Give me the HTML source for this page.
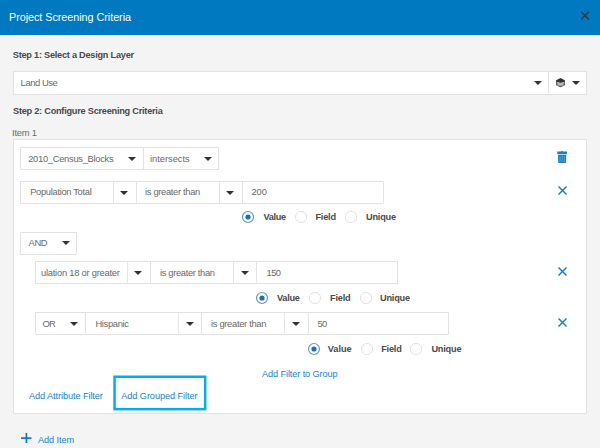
<!DOCTYPE html>
<html><head><meta charset="utf-8"><style>
*{box-sizing:border-box;margin:0;padding:0}
html,body{width:600px;height:448px;overflow:hidden;background:#f4f4f4;font-family:"Liberation Sans",sans-serif;color:#555}
.a{position:absolute;white-space:nowrap}
.hdr{left:0;top:0;width:600px;height:35px;background:#0079c1}
.title{font-size:10.8px;line-height:10px;color:#fff}
.lbl{font-size:9.2px;font-weight:bold;color:#4a4a4a;line-height:8px}
.txt{font-size:9.4px;line-height:8px;color:#6a6a6a}
.box{background:#fff;border:1px solid #e2e2e2;border-radius:1px;box-shadow:0 0 0.7px rgba(0,0,0,0.08)}
.sep{width:1px;background:#e6e6e6}
.arr{width:0;height:0;border-left:4.2px solid transparent;border-right:4.2px solid transparent;border-top:4.4px solid #333}
.link{font-size:9.2px;color:#1a82cc;line-height:8px}
.rad{width:12px;height:12px;border-radius:50%;border:1px solid #dcdcdc;background:#fff}
.rad.on{border:1.3px solid #5b9bc9}
.rad.on::after{content:"";position:absolute;left:2.2px;top:2.2px;width:5px;height:5px;border-radius:50%;background:#1f6fb0}
</style></head><body>
<div class="a hdr"></div>
<div class="a title" id="t0" style="left:9.00px;top:12px;letter-spacing:-0.040px">Project Screening Criteria</div>
<svg class="a" style="left:580px;top:10px" width="10" height="11" viewBox="0 0 10 11"><path d="M1.1 1.7L8.9 9.5M8.9 1.7L1.1 9.5" stroke="#2e3840" stroke-width="1.45"/></svg>
<div class="a lbl" id="t1" style="left:12.80px;top:51px;letter-spacing:-0.246px">Step 1: Select a Design Layer</div>
<div class="a box" style="left:13px;top:71px;width:574px;height:24px"></div>
<div class="a sep" style="left:548px;top:72px;height:22px"></div>
<div class="a txt" id="t2" style="left:20.60px;top:79px;letter-spacing:-0.429px">Land Use</div>
<div class="a arr" style="left:534.00px;top:80.70px"></div>
<div class="a arr" style="left:571.50px;top:80.70px"></div>
<svg class="a" style="left:555px;top:77px" width="12" height="11" viewBox="0 0 12 11"><path d="M5.5 4.8L9.4 3.8V8.2L5.5 9.7L1.6 8.2V3.8Z" fill="#9a9a9a" stroke="#333" stroke-width="0.8"/><path d="M2.3 5.6L8.7 8.6M8.7 5.6L2.3 8.6" stroke="#dadada" stroke-width="0.6"/><path d="M5.5 1.1L9.8 3.3V4.5L5.5 5.5L1.2 4.5V3.3Z" fill="#333"/></svg>
<div class="a lbl" id="t3" style="left:13.00px;top:107.3px;letter-spacing:-0.243px">Step 2: Configure Screening Criteria</div>
<div class="a txt" id="t4" style="left:12.00px;top:128.5px;letter-spacing:-0.200px">Item 1</div>
<div class="a box" style="left:13px;top:139px;width:574px;height:275px"></div>
<div class="a box" style="left:20px;top:147px;width:124px;height:23px"></div>
<div class="a txt" id="t5" style="left:28.20px;top:155px;letter-spacing:-0.306px">2010_Census_Blocks</div>
<div class="a arr" style="left:127.60px;top:157.00px"></div>
<div class="a box" style="left:143px;top:147px;width:76px;height:23px"></div>
<div class="a txt" id="t6" style="left:150.00px;top:155px;letter-spacing:-0.044px">intersects</div>
<div class="a arr" style="left:203.60px;top:157.00px"></div>
<svg class="a" style="left:552px;top:146px" width="20" height="22" viewBox="0 0 20 22"><path d="M8.6 4.9H11.4V5.8H8.6Z" fill="#3c8fd0"/><path d="M5.2 5.5H15V8.1H5.2Z" fill="#1a7fc4"/><path d="M5.9 8.8H14.3L14 16.4Q13.9 17 13.3 17H6.9Q6.3 17 6.2 16.4Z" fill="#1a7fc4"/><path d="M8 10V16M10.2 10V16M12.4 10V16" stroke="#6fb2e2" stroke-width="0.7"/></svg>
<div class="a box" style="left:20px;top:181px;width:117px;height:23px"></div>
<div class="a sep" style="left:113px;top:182px;height:21px"></div>
<div class="a txt" id="t7" style="left:30.20px;top:188px;letter-spacing:-0.333px">Population Total</div>
<div class="a arr" style="left:120.00px;top:190.50px"></div>
<div class="a box" style="left:136px;top:181px;width:107px;height:23px"></div>
<div class="a sep" style="left:219px;top:182px;height:21px"></div>
<div class="a txt" id="t8" style="left:145.00px;top:188px;letter-spacing:-0.329px">is greater than</div>
<div class="a arr" style="left:226.30px;top:190.50px"></div>
<div class="a box" style="left:242px;top:181px;width:142px;height:23px"></div>
<div class="a txt" id="t9" style="left:251.50px;top:188px;letter-spacing:-0.125px">200</div>
<svg class="a" style="left:241.40px;top:210.40px" width="14" height="14" viewBox="0 0 14 14"><circle cx="7" cy="7" r="5.5" fill="#fff" stroke="#5b9bc9" stroke-width="1.2"/><circle cx="7" cy="7" r="2.6" fill="#1f6fb0"/></svg>
<div class="a lbl" id="t10" style="left:263.40px;top:212.5px;letter-spacing:-0.300px">Value</div>
<svg class="a" style="left:294.40px;top:210.40px" width="14" height="14" viewBox="0 0 14 14"><circle cx="7" cy="7" r="5.6" fill="#fff" stroke="#e2e2e2" stroke-width="1"/></svg>
<div class="a lbl" id="t11" style="left:315.40px;top:212.5px;letter-spacing:-0.200px">Field</div>
<svg class="a" style="left:344.40px;top:210.40px" width="14" height="14" viewBox="0 0 14 14"><circle cx="7" cy="7" r="5.6" fill="#fff" stroke="#e2e2e2" stroke-width="1"/></svg>
<div class="a lbl" id="t12" style="left:366.00px;top:212.5px;letter-spacing:-0.200px">Unique</div>
<div class="a box" style="left:20px;top:232px;width:57px;height:23px"></div>
<div class="a txt" id="t13" style="left:28.50px;top:239px;letter-spacing:-0.375px">AND</div>
<div class="a arr" style="left:61.80px;top:241.00px"></div>
<div class="a box" style="left:35px;top:261px;width:116px;height:23px"></div>
<div class="a sep" style="left:127px;top:262px;height:21px"></div>
<div class="a txt" id="t14" style="left:41.00px;top:269px;letter-spacing:-0.250px">ulation 18 or greater</div>
<div class="a arr" style="left:134.10px;top:271.00px"></div>
<div class="a box" style="left:150px;top:261px;width:107px;height:23px"></div>
<div class="a sep" style="left:233px;top:262px;height:21px"></div>
<div class="a txt" id="t15" style="left:160.00px;top:269px;letter-spacing:-0.350px">is greater than</div>
<div class="a arr" style="left:240.60px;top:271.00px"></div>
<div class="a box" style="left:256px;top:261px;width:142px;height:23px"></div>
<div class="a txt" id="t16" style="left:266.60px;top:269px;letter-spacing:-0.650px">150</div>
<svg class="a" style="left:255.40px;top:291.10px" width="14" height="14" viewBox="0 0 14 14"><circle cx="7" cy="7" r="5.5" fill="#fff" stroke="#5b9bc9" stroke-width="1.2"/><circle cx="7" cy="7" r="2.6" fill="#1f6fb0"/></svg>
<div class="a lbl" id="t17" style="left:277.00px;top:293.5px;letter-spacing:-0.300px">Value</div>
<svg class="a" style="left:308.20px;top:291.10px" width="14" height="14" viewBox="0 0 14 14"><circle cx="7" cy="7" r="5.6" fill="#fff" stroke="#e2e2e2" stroke-width="1"/></svg>
<div class="a lbl" id="t18" style="left:330.00px;top:293.5px;letter-spacing:-0.200px">Field</div>
<svg class="a" style="left:358.60px;top:291.10px" width="14" height="14" viewBox="0 0 14 14"><circle cx="7" cy="7" r="5.6" fill="#fff" stroke="#e2e2e2" stroke-width="1"/></svg>
<div class="a lbl" id="t19" style="left:380.00px;top:293.5px;letter-spacing:-0.200px">Unique</div>
<div class="a box" style="left:35px;top:312px;width:51px;height:23px"></div>
<div class="a txt" id="t20" style="left:42.60px;top:320px;letter-spacing:-0.800px">OR</div>
<div class="a arr" style="left:69.60px;top:322.00px"></div>
<div class="a box" style="left:85px;top:312px;width:117px;height:23px"></div>
<div class="a sep" style="left:178px;top:313px;height:21px"></div>
<div class="a txt" id="t21" style="left:95.40px;top:320px;letter-spacing:-0.343px">Hispanic</div>
<div class="a arr" style="left:185.60px;top:322.00px"></div>
<div class="a box" style="left:201px;top:312px;width:108px;height:23px"></div>
<div class="a sep" style="left:284px;top:313px;height:21px"></div>
<div class="a txt" id="t22" style="left:211.00px;top:320px;letter-spacing:-0.321px">is greater than</div>
<div class="a arr" style="left:291.80px;top:322.00px"></div>
<div class="a box" style="left:308px;top:312px;width:141px;height:23px"></div>
<div class="a txt" id="t23" style="left:317.60px;top:320px;letter-spacing:-0.800px">50</div>
<svg class="a" style="left:306.80px;top:342.40px" width="14" height="14" viewBox="0 0 14 14"><circle cx="7" cy="7" r="5.5" fill="#fff" stroke="#5b9bc9" stroke-width="1.2"/><circle cx="7" cy="7" r="2.6" fill="#1f6fb0"/></svg>
<div class="a lbl" id="t24" style="left:327.80px;top:345px;letter-spacing:-0.050px">Value</div>
<svg class="a" style="left:360.00px;top:342.40px" width="14" height="14" viewBox="0 0 14 14"><circle cx="7" cy="7" r="5.6" fill="#fff" stroke="#e2e2e2" stroke-width="1"/></svg>
<div class="a lbl" id="t25" style="left:381.20px;top:345px;letter-spacing:-0.200px">Field</div>
<svg class="a" style="left:409.40px;top:342.40px" width="14" height="14" viewBox="0 0 14 14"><circle cx="7" cy="7" r="5.6" fill="#fff" stroke="#e2e2e2" stroke-width="1"/></svg>
<div class="a lbl" id="t26" style="left:431.40px;top:345px;letter-spacing:-0.200px">Unique</div>
<svg class="a" style="left:557px;top:185.0px" width="11" height="11" viewBox="0 0 11 11"><path d="M1.5 1.5L9.5 9.5M9.5 1.5L1.5 9.5" stroke="#1079c8" stroke-width="1.4"/></svg>
<svg class="a" style="left:557px;top:265.5px" width="11" height="11" viewBox="0 0 11 11"><path d="M1.5 1.5L9.5 9.5M9.5 1.5L1.5 9.5" stroke="#1079c8" stroke-width="1.4"/></svg>
<svg class="a" style="left:557px;top:316.5px" width="11" height="11" viewBox="0 0 11 11"><path d="M1.5 1.5L9.5 9.5M9.5 1.5L1.5 9.5" stroke="#1079c8" stroke-width="1.4"/></svg>
<div class="a link" id="t27" style="left:262.00px;top:370.3px;letter-spacing:-0.111px">Add Filter to Group</div>
<div class="a link" id="t28" style="left:29.00px;top:391.5px;letter-spacing:-0.089px">Add Attribute Filter</div>
<svg class="a" style="left:110px;top:370px" width="100" height="45" viewBox="0 0 100 45"><rect x="4.55" y="6.75" width="90.6" height="32.4" fill="none" stroke="#00adef" stroke-width="2.5"/></svg>
<div class="a link" id="t29" style="left:121.20px;top:391.5px;letter-spacing:-0.071px">Add Grouped Filter</div>
<svg class="a" style="left:20px;top:432px" width="13" height="12" viewBox="0 0 13 12"><path d="M6.4 0.9V11M1.1 6.1H11.4" stroke="#0a7cc8" stroke-width="1.7"/></svg>
<div class="a link" id="t30" style="left:38.00px;top:436px;letter-spacing:-0.100px">Add Item</div>
</body></html>
